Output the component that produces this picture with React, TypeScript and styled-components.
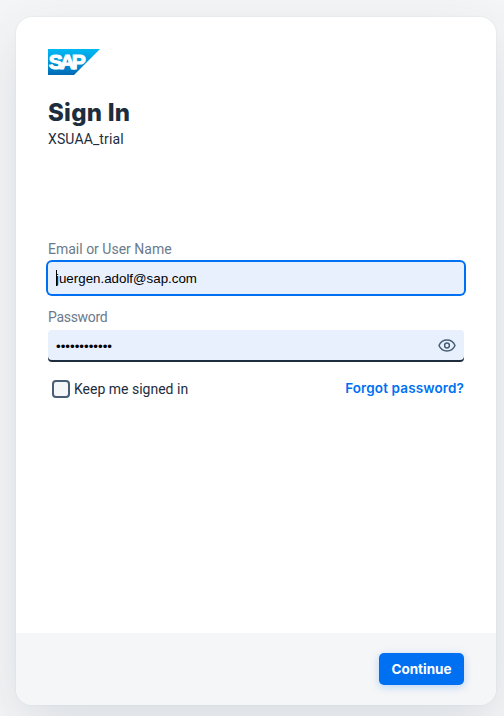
import React from "react";
import styled, { createGlobalStyle } from "styled-components";

const GlobalStyle = createGlobalStyle`
  * { box-sizing: border-box; }
  body {
    margin: 0;
    background: #f5f6f7;
    color: #1d2d3e;
    font-family: Roboto, sans-serif;
    overflow: hidden;
  }
`;

const Page = styled.div`
  height: 716px;
  padding: 17px 8px 11px 16px;
`;

const Card = styled.main`
  display: flex;
  flex-direction: column;
  width: 480px;
  height: 688px;
  border-radius: 16px;
  background: #fff;
  overflow: hidden;
  box-shadow: 0 20px 60px rgba(34, 53, 82, 0.13), 0 0 2px rgba(34, 53, 82, 0.1);
`;

const Content = styled.div`
  flex: 1;
  padding: 32px;
`;

const Logo = styled.svg`
  display: block;
`;

const Title = styled.h1`
  margin: 20px 0 0;
  height: 35px;
  font: 800 24px/35px Inter, sans-serif;
  letter-spacing: 0.25px;
`;

const Text = styled.span<{ $spacing?: number }>`
  font-size: 14px;
  line-height: 18px;
  white-space: nowrap;
  letter-spacing: ${(p) => p.$spacing ?? 0}px;
`;

const Subtitle = styled(Text)`
  display: block;
  height: 18px;
`;

const Form = styled.form`
  margin-top: 92px;
`;

const Label = styled(Text).attrs({ as: "label" })`
  display: block;
  height: 18px;
  color: #6b7a8b;
`;

const Field = styled.div<{ $focused?: boolean }>`
  position: relative;
  display: flex;
  align-items: center;
  height: 32px;
  margin-top: 4px;
  padding: 0 8px;
  border-radius: 4px;
  background: #e8f0fe;
  overflow: ${(p) => (p.$focused ? "visible" : "hidden")};
  box-shadow: ${(p) => (p.$focused ? "0 0 0 2px #0070f2" : "inset 0 -2px #1d2d3e")};
`;

const Input = styled.input`
  flex: 1;
  min-width: 0;
  padding: 0;
  border: 0;
  outline: 0;
  background: transparent;
  color: #000;
  font: 13.333px "Liberation Sans", Arial, sans-serif;
`;

const Caret = styled.i`
  position: absolute;
  left: 8px;
  top: 8px;
  width: 1px;
  height: 16px;
  background: #000;
`;

const Gap = styled.div`
  height: 14px;
`;

const Options = styled.div`
  display: flex;
  justify-content: space-between;
  height: 18px;
  margin-top: 18px;
  padding-left: 4px;
`;

const Remember = styled.label`
  display: flex;
  gap: 4px;
`;

const Checkbox = styled.span`
  width: 18px;
  height: 18px;
  border: 2px solid #475e75;
  border-radius: 4px;
  background: #f5f6f7;
`;

const Link = styled(Text)`
  color: #0070f2;
  font-family: Inter, sans-serif;
  font-size: 13.5px;
  font-weight: 600;
  margin-top: -1px;
`;

const Footer = styled.footer`
  display: flex;
  justify-content: flex-end;
  height: 72px;
  padding: 20px 32px;
  background: #f5f6f7;
`;

const Button = styled.button`
  width: 85px;
  height: 32px;
  padding: 0;
  border: 0;
  border-radius: 5px;
  background: #0070f2;
  color: #fff;
  font: 700 13.5px/32px Inter, sans-serif;
  box-shadow: 0 2px 8px rgba(0, 112, 242, 0.25);
`;

const SapLogo = () => (
  <Logo width="52" height="26" viewBox="0 0 52 26" aria-label="SAP">
    <defs>
      <linearGradient id="blue" x1="0" y1="0" x2="0" y2="1">
        <stop stopColor="#00b9f2" />
        <stop offset="0.5" stopColor="#0097dc" />
        <stop offset="1" stopColor="#0069b4" />
      </linearGradient>
    </defs>
    <path d="M0 0H52L26 26H0Z" fill="url(#blue)" />
    <text x="0.8" y="20.3" fill="#fff" stroke="#fff" strokeWidth="1.1" fontFamily="Liberation Sans, sans-serif" fontWeight="700" fontSize="21" textLength="37" lengthAdjust="spacing">SAP</text>
  </Logo>
);

const EyeIcon = () => (
  <svg width="18" height="16" viewBox="0 0 18 16" fill="none" stroke="#475e75" strokeWidth="1.5">
    <path d="M1 7.5C2.6 3.8 5.4 2 9 2S15.4 3.8 17 7.5C15.4 11.2 12.6 13 9 13S2.6 11.2 1 7.5Z" strokeLinejoin="round" />
    <circle cx="9" cy="7.5" r="2.4" />
  </svg>
);

export default function App() {
  return (
    <>
      <GlobalStyle />
      <Page>
        <Card>
          <Content>
            <SapLogo />
            <Title>Sign In</Title>
            <Subtitle $spacing={0.12}>XSUAA_trial</Subtitle>
            <Form>
              <Label>Email or User Name</Label>
              <Field $focused>
                <Input defaultValue="juergen.adolf@sap.com" />
                <Caret />
              </Field>
              <Gap />
              <Label $spacing={-0.3}>Password</Label>
              <Field>
                <Input type="password" defaultValue="abcdefghijkl" />
                <EyeIcon />
              </Field>
              <Options>
                <Remember>
                  <Checkbox />
                  <Text>Keep me signed in</Text>
                </Remember>
                <Link $spacing={0.12}>Forgot password?</Link>
              </Options>
            </Form>
          </Content>
          <Footer>
            <Button type="button">Continue</Button>
          </Footer>
        </Card>
      </Page>
    </>
  );
}
